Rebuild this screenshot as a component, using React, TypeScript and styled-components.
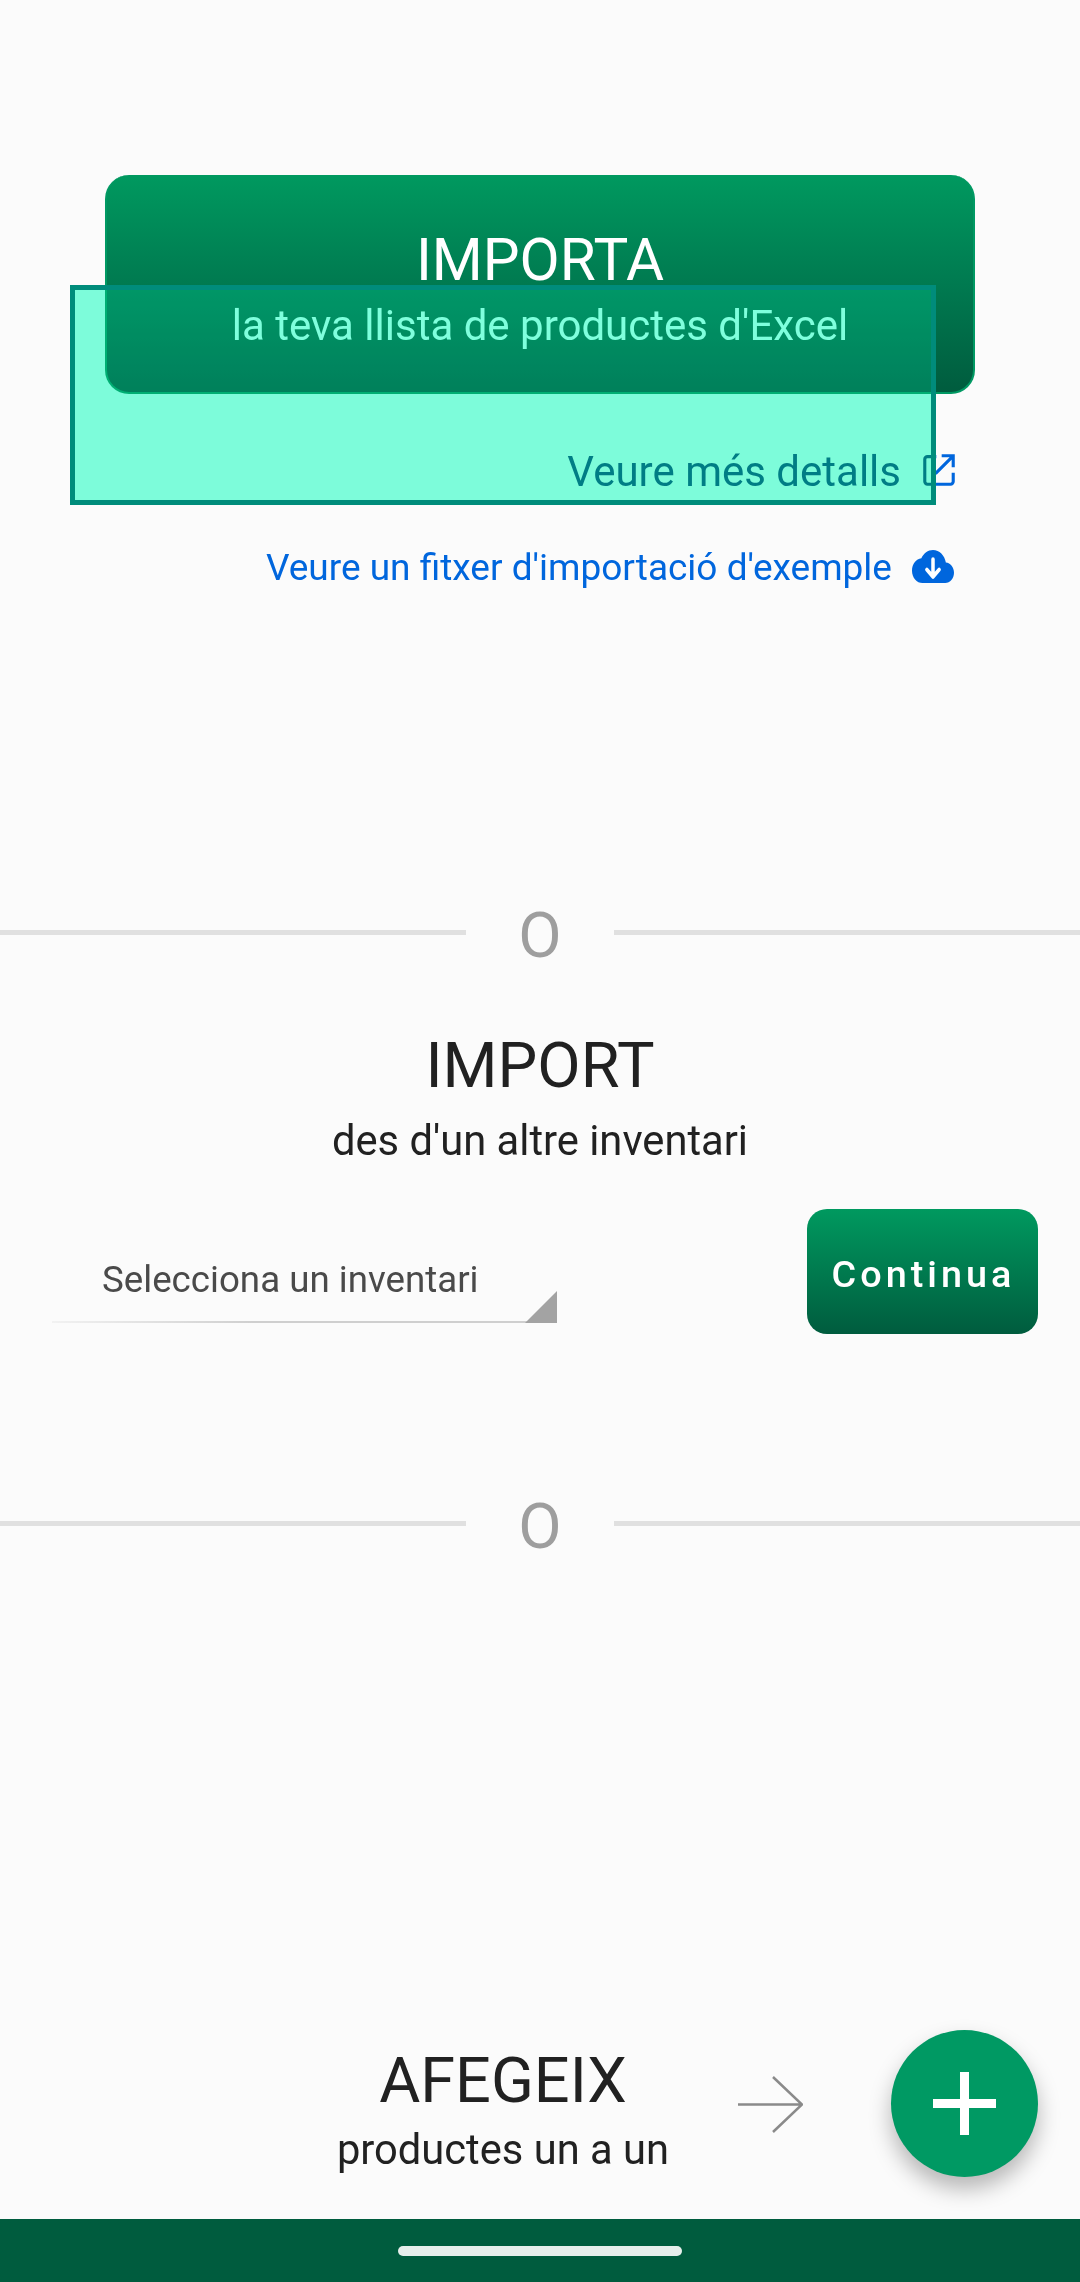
import styled, { createGlobalStyle } from "styled-components";

const GlobalStyle = createGlobalStyle`
  html, body {
    margin: 0;
    padding: 0;
    background: #fbfbfb;
    font-family: Roboto, "Liberation Sans", sans-serif;
  }
  * {
    box-sizing: border-box;
  }
`;

const Screen = styled.div`
  position: relative;
  isolation: isolate;
  width: 1080px;
  height: 2282px;
  display: flex;
  flex-direction: column;
  background: #fbfbfb;
  overflow: hidden;
`;

const Content = styled.main`
  flex: 1;
  display: flex;
  flex-direction: column;
  padding-top: 175px;
`;

const ExcelCard = styled.button`
  align-self: center;
  width: 870px;
  height: 219px;
  padding: 0;
  border: 2px solid #009963;
  border-top: 0;
  border-radius: 24px;
  display: flex;
  flex-direction: column;
  align-items: center;
  color: #fff;
  font-family: inherit;
  background: linear-gradient(180deg, #00995f 0%, #007a50 50%, #005c3e 100%);
`;

const CardTitle = styled.span`
  margin-top: 52px;
  font-size: 58.4px;
  line-height: 66px;
`;

const CardSubtitle = styled.span`
  margin-top: 8px;
  font-size: 42px;
  line-height: 50px;
`;

const LinkRow = styled.a<{ $top: number; $right: number; $gap: number }>`
  display: flex;
  justify-content: flex-end;
  align-items: center;
  gap: ${(p) => p.$gap}px;
  margin-top: ${(p) => p.$top}px;
  padding-right: ${(p) => p.$right}px;
  color: #0066dd;
  text-decoration: none;
`;

const DetailsText = styled.span`
  font-size: 42px;
  line-height: 50px;
  color: #00587c;
`;

const SampleText = styled.span`
  font-size: 37px;
  line-height: 44px;
`;

const OpenIcon = styled.svg`
  width: 32px;
  height: 32px;
  margin-bottom: 4px;
`;

const CloudIcon = styled.svg`
  width: 42px;
  height: 33px;
  margin-bottom: 3px;
`;

const Highlight = styled.div`
  position: absolute;
  left: 70px;
  top: 285px;
  width: 866px;
  height: 220px;
  border: 5px solid #008c7b;

  &::before,
  &::after {
    content: "";
    position: absolute;
    inset: 0;
  }
  &::before {
    background: rgba(0, 255, 255, 0.225);
  }
  &::after {
    background: rgb(164, 255, 221);
    mix-blend-mode: multiply;
  }
`;

const DividerRow = styled.div<{ $top: number }>`
  display: flex;
  align-items: center;
  justify-content: space-between;
  margin-top: ${(p) => p.$top}px;
  height: 70px;
`;

const Line = styled.div`
  width: 466px;
  height: 5px;
  background: #e0e0e0;
`;

const OrLabel = styled.span`
  padding-top: 8px;
  font-size: 63px;
  line-height: 70px;
  color: #9e9e9e;
`;

const Heading = styled.h2<{ $top?: number }>`
  margin: ${(p) => p.$top ?? 0}px 0 0;
  text-align: center;
  font-size: 63px;
  line-height: 70px;
  font-weight: 400;
  color: #212121;
`;

const Sub = styled.p<{ $gap: number }>`
  margin: ${(p) => p.$gap}px 0 0;
  text-align: center;
  font-size: 41.7px;
  line-height: 48px;
  color: #212121;
`;

const PickerRow = styled.div`
  display: flex;
  align-items: flex-end;
  justify-content: space-between;
  margin-top: 44px;
  padding: 0 42px 11px 52px;
`;

const Picker = styled.div`
  position: relative;
  width: 505px;
  height: 77px;
  padding: 7px 0 0 50px;
  border-bottom: 2px solid;
  border-image: linear-gradient(90deg, #f2f2f2, #cfcfcf 40%, #cfcfcf) 1;
  font-size: 36.7px;
  line-height: 54px;
  color: #4a4a4a;
`;

const Caret = styled.span`
  position: absolute;
  right: 0;
  bottom: -2px;
  width: 32px;
  height: 32px;
  background: #a3a3a3;
  clip-path: polygon(100% 0, 100% 100%, 0 100%);
`;

const ContinueButton = styled.button`
  width: 231px;
  height: 125px;
  margin-bottom: -11px;
  padding: 5px 0 0 2px;
  border: 0;
  border-radius: 20px;
  color: #fff;
  font-family: inherit;
  font-size: 37.8px;
  font-weight: 500;
  letter-spacing: 4px;
  background: linear-gradient(180deg, #00995f 0%, #005c3e 100%);
`;

const AddRow = styled.section`
  display: flex;
  align-items: center;
  margin-top: auto;
  padding: 0 42px 42px 0;
`;

const AddText = styled.div`
  margin-left: 325px;
  width: 356px;
  padding-top: 12px;
`;

const ArrowIcon = styled.svg`
  margin: 2px 0 0 57px;
  width: 65px;
  height: 57px;
`;

const Fab = styled.button`
  margin-left: auto;
  width: 147px;
  height: 147px;
  padding: 0;
  border: 0;
  border-radius: 50%;
  display: flex;
  align-items: center;
  justify-content: center;
  background: #009963;
  box-shadow: 0 12px 22px rgba(0, 0, 0, 0.28);
`;

const NavBar = styled.nav`
  height: 63px;
  display: flex;
  align-items: center;
  justify-content: center;
  background: #005c3e;
`;

const HomePill = styled.div`
  width: 284px;
  height: 10px;
  border-radius: 5px;
  background: #e6efec;
`;

export default function App() {
  return (
    <>
      <GlobalStyle />
      <Screen>
        <Content>
          <ExcelCard>
            <CardTitle>IMPORTA</CardTitle>
            <CardSubtitle>la teva llista de productes d'Excel</CardSubtitle>
          </ExcelCard>
          <LinkRow $top={53} $right={125} $gap={22}>
            <DetailsText>Veure més detalls</DetailsText>
            <OpenIcon viewBox="0 0 36 36" fill="none" strokeWidth="3.5">
              <defs>
                <linearGradient id="openStroke" gradientUnits="userSpaceOnUse" x1="0" y1="0" x2="36" y2="0">
                  <stop offset="0.4" stopColor="#00587c" />
                  <stop offset="0.4" stopColor="#0066dd" />
                </linearGradient>
              </defs>
              <path stroke="url(#openStroke)" d="M15 3H5a3 3 0 0 0-3 3v25a3 3 0 0 0 3 3h26a3 3 0 0 0 3-3V21" />
              <path stroke="url(#openStroke)" d="M21 2h13v13M34 2 14 22" />
            </OpenIcon>
          </LinkRow>
          <LinkRow $top={49} $right={126} $gap={20}>
            <SampleText>Veure un fitxer d'importació d'exemple</SampleText>
            <CloudIcon viewBox="0 4 24 16" preserveAspectRatio="none">
              <path fill="#0066dd" d="M19.350 10.040C18.670 6.590 15.640 4 12 4 9.110 4 6.600 5.640 5.350 8.040 2.340 8.360 0 10.910 0 14c0 3.310 2.690 6 6 6h13c2.760 0 5-2.240 5-5 0-2.640-2.050-4.780-4.650-4.960Z" />
              <path fill="none" stroke="#fff" strokeWidth="2" strokeLinecap="round" strokeLinejoin="round" d="M12 8.500v8M8.500 13.500l3.500 3.500 3.500-3.500" />
            </CloudIcon>
          </LinkRow>
          <DividerRow $top={307}>
            <Line />
            <OrLabel>O</OrLabel>
            <Line />
          </DividerRow>
          <Heading $top={64}>IMPORT</Heading>
          <Sub $gap={16}>des d'un altre inventari</Sub>
          <PickerRow>
            <Picker>
              Selecciona un inventari
              <Caret />
            </Picker>
            <ContinueButton>Continua</ContinueButton>
          </PickerRow>
          <DividerRow $top={154}>
            <Line />
            <OrLabel>O</OrLabel>
            <Line />
          </DividerRow>
          <AddRow>
            <AddText>
              <Heading>AFEGEIX</Heading>
              <Sub $gap={10}>productes un a un</Sub>
            </AddText>
            <ArrowIcon viewBox="0 0 65 57" fill="none" stroke="#8a8a8a" strokeWidth="2.500">
              <path d="M0 28.500h64M35 1l29 27.500L35 56" />
            </ArrowIcon>
            <Fab>
              <svg width="63" height="63" viewBox="0 0 63 63" fill="#fff">
                <path d="M27 0h9v27h27v9H36v27h-9V36H0v-9h27Z" />
              </svg>
            </Fab>
          </AddRow>
        </Content>
        <NavBar>
          <HomePill />
        </NavBar>
        <Highlight />
      </Screen>
    </>
  );
}
